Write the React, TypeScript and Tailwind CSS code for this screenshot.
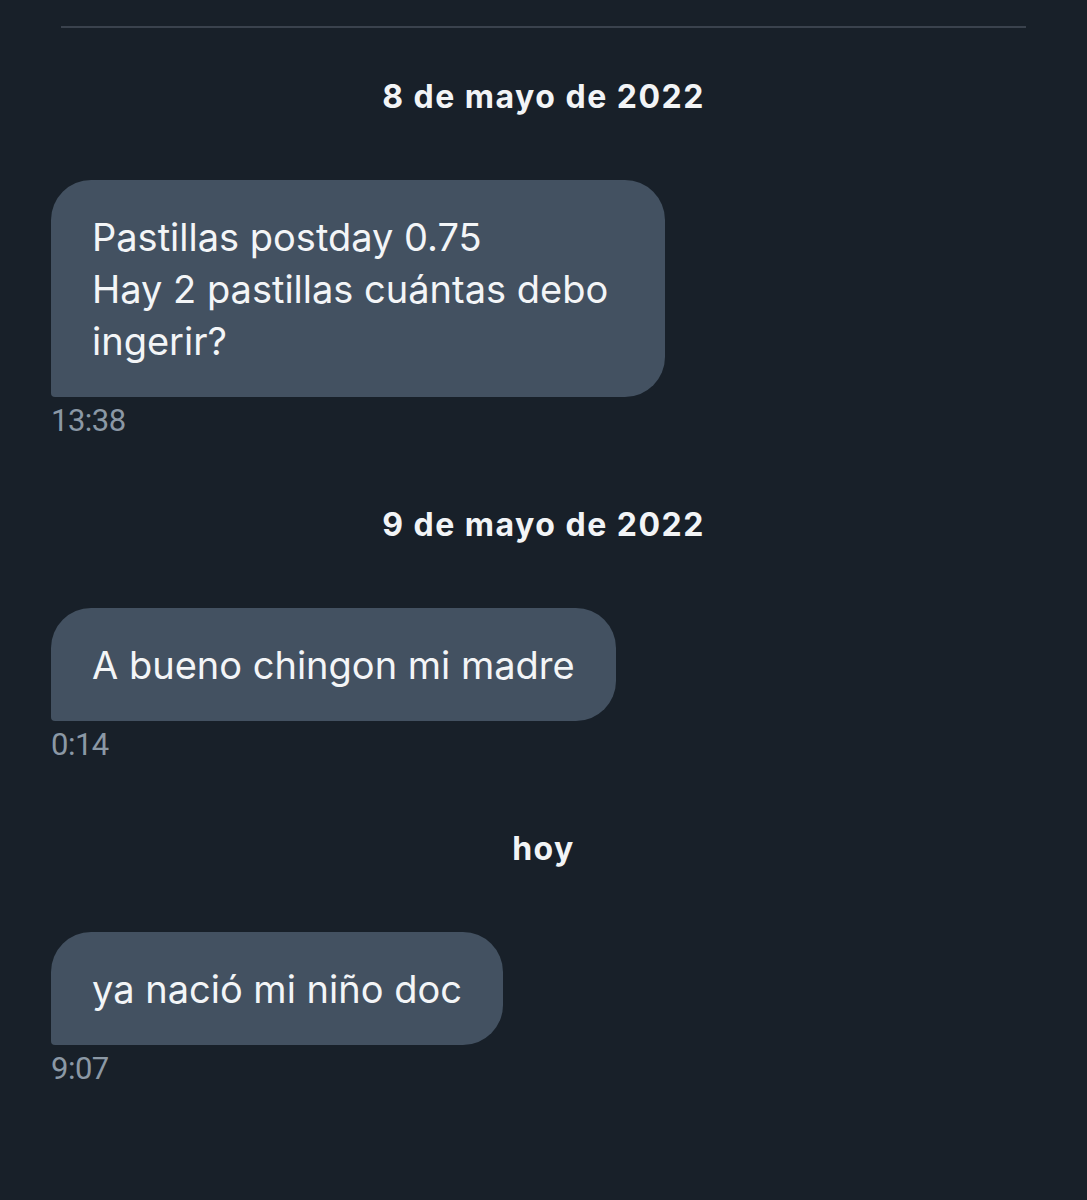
const messages = [
  {
    date: "8 de mayo de 2022",
    lines: ["Pastillas postday 0.75", "Hay 2 pastillas cuántas debo", "ingerir?"],
    time: "13:38",
    width: "w-[614px]",
  },
  { date: "9 de mayo de 2022", lines: ["A bueno chingon mi madre"], time: "0:14", width: "w-fit" },
  { date: "hoy", lines: ["ya nació mi niño doc"], time: "9:07", width: "w-fit" },
];

export default function App() {
  return (
    <main
      className="min-h-[1200px] w-full bg-[#182029] px-[51px] pt-[26px] text-white"
      style={{ fontFamily: "Inter, 'Liberation Sans', sans-serif" }}
    >
      <div className="mx-[10px] h-[2px] bg-[#3a424d]" />

      <div className="flex flex-col">
        {messages.map((m, i) => (
          <section key={i} className={i === 0 ? "mt-[49px]" : "mt-[68px]"}>
            {/* day separator */}
            <h2 className="text-center text-[32px] font-bold leading-[40px] tracking-[1.5px] text-[#f2f4f6]">
              {m.date}
            </h2>

            {/* bubble */}
            <div
              className={`mt-[63px] ${m.width} rounded-[40px] rounded-bl-[4px] bg-[#435161] px-[41px] py-[30.5px] text-[38px] leading-[52px] text-[#f3f5f7]`}
            >
              {m.lines.map((l, j) => (
                <p key={j} className="whitespace-nowrap">
                  {l}
                </p>
              ))}
            </div>
            <p
              className="mt-[8px] text-[31px] leading-[32px] tracking-[-0.5px] text-[#8b98a5]"
              style={{ fontFamily: "Roboto, sans-serif" }}
            >
              {m.time}
            </p>
          </section>
        ))}
      </div>
    </main>
  );
}
